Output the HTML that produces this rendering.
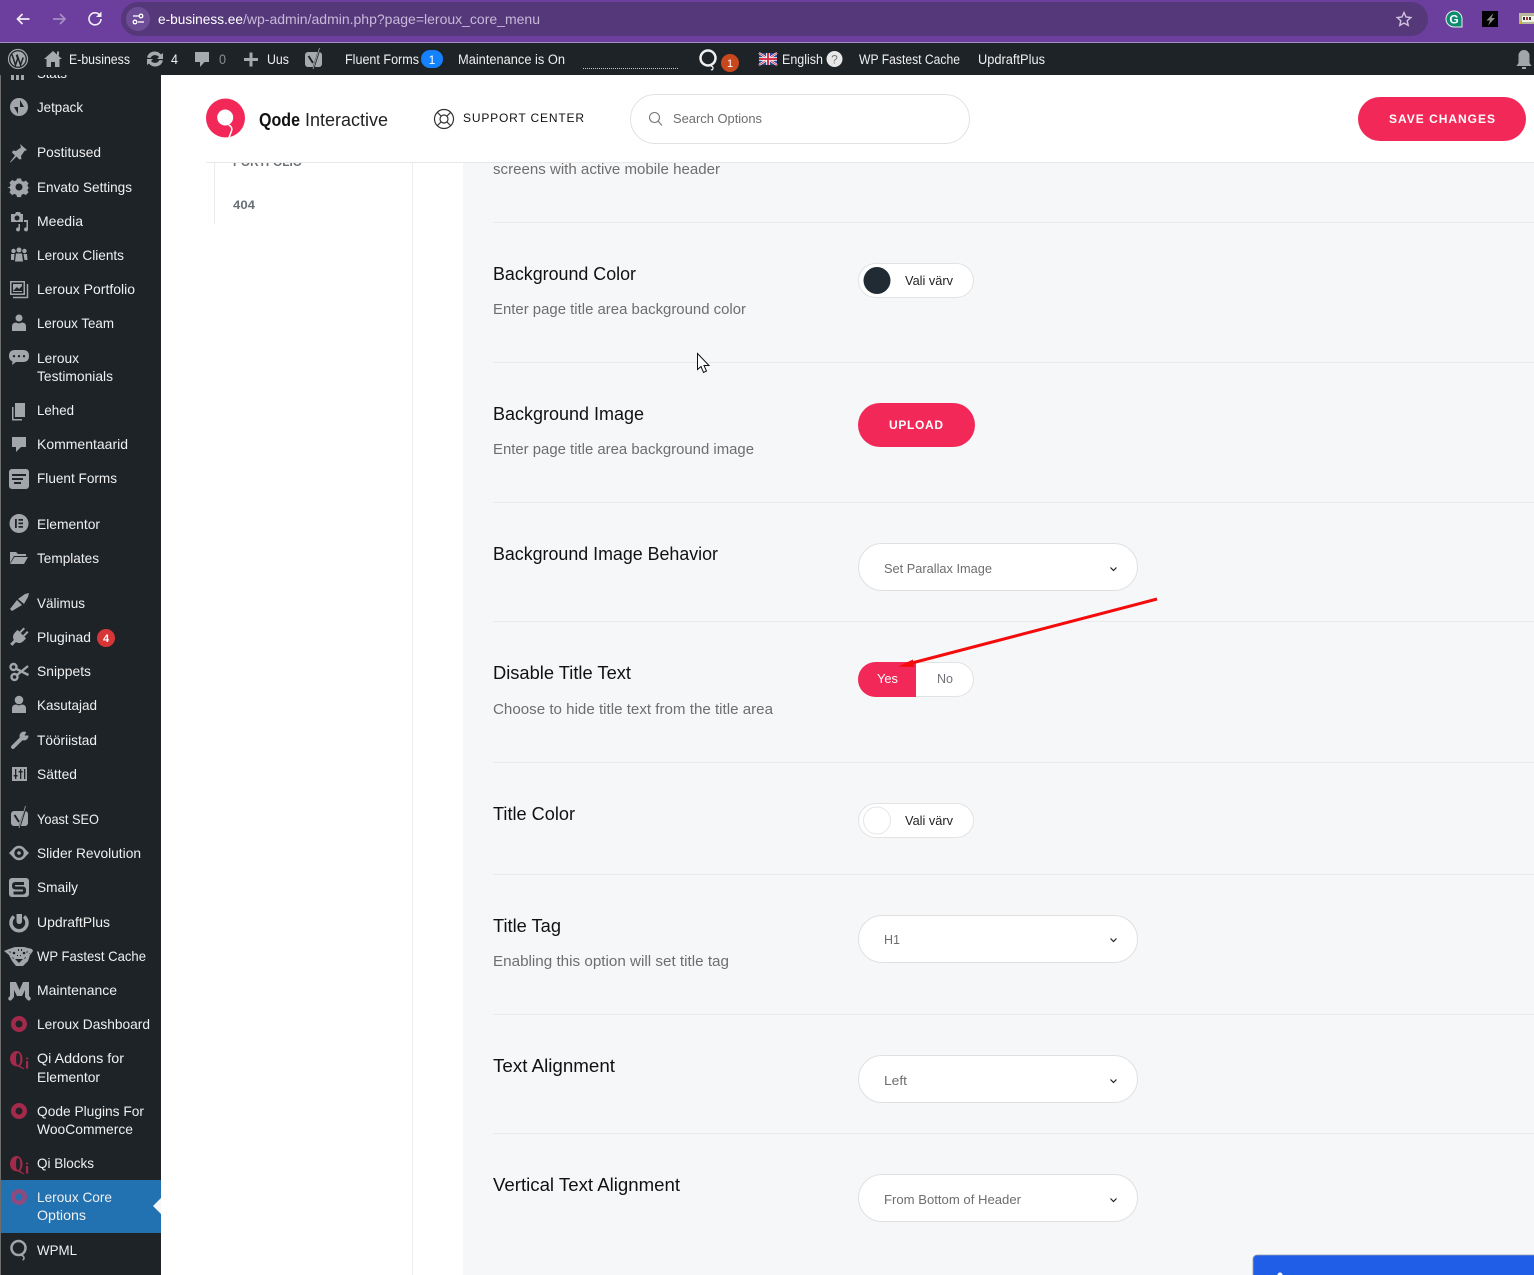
<!DOCTYPE html>
<html><head><meta charset="utf-8"><title>Leroux Core Options</title>
<style>
html,body{margin:0;padding:0;background:#fff}
svg{display:block}
text{font-family:"Liberation Sans",sans-serif;white-space:pre}
.m{font-size:14px;fill:#f0f0f1}
.a{font-size:13.5px;fill:#f0f0f1}
.t{font-size:18px;fill:#111}
.d{font-size:14.5px;fill:#6e6e6e}
.s{font-size:13px;fill:#6e6e6e}
.i{fill:#a2a6ab}
.r{fill:#a32a4a}
</style></head><body>
<svg xmlns="http://www.w3.org/2000/svg" width="1534" height="1275" viewBox="0 0 1534 1275">
<rect width="1534" height="1275" fill="#fff"/>

<!-- content -->
<rect x="463" y="162" width="1071" height="1113" fill="#f6f7f9"/>
<rect x="412" y="162" width="1" height="1113" fill="#eeeeee"/>
<rect x="214" y="162" width="1" height="62" fill="#ececec"/>
<text x="233" y="166" font-size="12" font-weight="bold" fill="#6b7075" textLength="69" lengthAdjust="spacingAndGlyphs">PORTFOLIO</text>
<text x="233" y="209" font-size="12" font-weight="bold" fill="#6b7075" textLength="22" lengthAdjust="spacingAndGlyphs">404</text>

<text x="493" y="174" class="d" textLength="227" lengthAdjust="spacingAndGlyphs">screens with active mobile header</text>
<g fill="#e9ebee">
<rect x="493" y="222" width="1041" height="1"/><rect x="493" y="362" width="1041" height="1"/>
<rect x="493" y="502" width="1041" height="1"/><rect x="493" y="621" width="1041" height="1"/>
<rect x="493" y="762" width="1041" height="1"/><rect x="493" y="874" width="1041" height="1"/>
<rect x="493" y="1014" width="1041" height="1"/><rect x="493" y="1133" width="1041" height="1"/>
</g>

<text x="493" y="280" class="t" textLength="143" lengthAdjust="spacingAndGlyphs">Background Color</text>
<text x="493" y="314" class="d" textLength="253" lengthAdjust="spacingAndGlyphs">Enter page title area background color</text>
<text x="493" y="420" class="t" textLength="151" lengthAdjust="spacingAndGlyphs">Background Image</text>
<text x="493" y="454" class="d" textLength="261" lengthAdjust="spacingAndGlyphs">Enter page title area background image</text>
<text x="493" y="560" class="t" textLength="225" lengthAdjust="spacingAndGlyphs">Background Image Behavior</text>
<text x="493" y="679" class="t" textLength="138" lengthAdjust="spacingAndGlyphs">Disable Title Text</text>
<text x="493" y="714" class="d" textLength="280" lengthAdjust="spacingAndGlyphs">Choose to hide title text from the title area</text>
<text x="493" y="820" class="t" textLength="82" lengthAdjust="spacingAndGlyphs">Title Color</text>
<text x="493" y="932" class="t" textLength="68" lengthAdjust="spacingAndGlyphs">Title Tag</text>
<text x="493" y="966" class="d" textLength="236" lengthAdjust="spacingAndGlyphs">Enabling this option will set title tag</text>
<text x="493" y="1072" class="t" textLength="122" lengthAdjust="spacingAndGlyphs">Text Alignment</text>
<text x="493" y="1191" class="t" textLength="187" lengthAdjust="spacingAndGlyphs">Vertical Text Alignment</text>

<!-- colour picker 1 -->
<rect x="858.5" y="263.5" width="115" height="34" rx="17" fill="#fff" stroke="#e3e3e3"/>
<circle cx="877" cy="280.5" r="13.5" fill="#212b33"/>
<text x="905" y="285" font-size="13" fill="#222" textLength="48" lengthAdjust="spacingAndGlyphs">Vali värv</text>
<!-- upload -->
<rect x="858" y="403" width="117" height="44" rx="22" fill="#f22958"/>
<text x="889" y="429" font-size="12" font-weight="bold" fill="#fff" textLength="54" lengthAdjust="spacing">UPLOAD</text>
<!-- selects -->
<g fill="#fff" stroke="#e0e0e0">
<rect x="858.5" y="543.5" width="279" height="47" rx="23.5"/>
<rect x="858.5" y="915.5" width="279" height="47" rx="23.5"/>
<rect x="858.5" y="1055.5" width="279" height="47" rx="23.5"/>
<rect x="858.5" y="1174.5" width="279" height="47" rx="23.5"/>
</g>
<text x="884" y="573" class="s" textLength="108" lengthAdjust="spacingAndGlyphs">Set Parallax Image</text>
<text x="884" y="944" class="s" textLength="16" lengthAdjust="spacingAndGlyphs">H1</text>
<text x="884" y="1085" class="s" textLength="23" lengthAdjust="spacingAndGlyphs">Left</text>
<text x="884" y="1204" class="s" textLength="137" lengthAdjust="spacingAndGlyphs">From Bottom of Header</text>
<g fill="none" stroke="#222" stroke-width="1.2">
<path d="M1110.5 567.5l3 3 3-3"/><path d="M1110.5 938.5l3 3 3-3"/><path d="M1110.5 1079.5l3 3 3-3"/><path d="M1110.5 1198.5l3 3 3-3"/>
</g>
<!-- yes/no -->
<rect x="858.5" y="662.5" width="115" height="34" rx="17" fill="#fff" stroke="#e3e3e3"/>
<path d="M916 662H875.5a17.500 17.500 0 0 0 0 35H916z" fill="#f22958"/>
<text x="877" y="683" font-size="13" fill="#fff" textLength="21" lengthAdjust="spacingAndGlyphs">Yes</text>
<text x="937" y="683" font-size="13" fill="#6e7278" textLength="16" lengthAdjust="spacingAndGlyphs">No</text>
<!-- colour picker 2 -->
<rect x="858.500" y="803.500" width="115" height="34" rx="17" fill="#fff" stroke="#e3e3e3"/>
<circle cx="877" cy="820.500" r="13.500" fill="#fff" stroke="#e6e6e6"/>
<text x="905" y="825" font-size="13" fill="#222" textLength="48" lengthAdjust="spacingAndGlyphs">Vali värv</text>

<!-- red arrow -->
<path d="M1157 599L908 664" stroke="#f40c0c" stroke-width="3" fill="none"/>
<path d="M898 666.500L913 659.500L914 667z" fill="#f40c0c"/>
<!-- cursor -->
<path d="M697.500 353.500V369.500L701 366.500L703.500 372.500L706.500 371L704 365.500H709z" fill="#fff" stroke="#111" stroke-width="1"/>
<!-- blue widget -->
<path d="M1253 1275V1259a4 4 0 0 1 4-4H1534V1275z" fill="#215ee8"/>
<path d="M1253 1275V1259a4 4 0 0 1 4-4H1534" fill="none" stroke="#9a9ea6" stroke-width=".8"/>
<circle cx="1280" cy="1275" r="2.500" fill="#fff"/>

<!-- header -->
<rect x="161" y="75" width="1373" height="87" fill="#fff"/>
<rect x="206" y="162" width="1328" height="1" fill="#e8e8e8"/>
<circle cx="225.500" cy="118" r="19.500" fill="#f22958"/>
<circle cx="225.200" cy="117.500" r="8" fill="#fff"/>
<path d="M228 124.500q5 2.500 3.500 6.500t-2.500 6.500" fill="none" stroke="#fff" stroke-width="1.500"/>
<text x="259" y="126" font-size="18.500" font-weight="bold" fill="#111" textLength="41" lengthAdjust="spacingAndGlyphs">Qode</text>
<text x="305" y="126" font-size="18.500" fill="#222" textLength="83" lengthAdjust="spacingAndGlyphs">Interactive</text>
<g fill="none" stroke="#333" stroke-width="1.200">
<circle cx="444" cy="119" r="9.500"/><circle cx="444" cy="119" r="4"/>
<path d="M437.500 112.500l3.700 3.700M450.500 112.500l-3.700 3.700M437.500 125.500l3.700-3.700M450.500 125.500l-3.700-3.700"/>
</g>
<text x="463" y="122" font-size="12" fill="#111" textLength="121" lengthAdjust="spacing">SUPPORT CENTER</text>
<rect x="630.500" y="94.500" width="339" height="49" rx="24.500" fill="#fff" stroke="#e2e2e2"/>
<circle cx="654.500" cy="117.500" r="5" fill="none" stroke="#777" stroke-width="1.100"/>
<path d="M658 121l4 4.500" stroke="#777" stroke-width="1.100"/>
<text x="673" y="123" class="s" textLength="89" lengthAdjust="spacingAndGlyphs">Search Options</text>
<rect x="1358" y="97" width="168" height="44" rx="22" fill="#f22958"/>
<text x="1389" y="123" font-size="12" font-weight="bold" fill="#fff" textLength="106" lengthAdjust="spacing">SAVE CHANGES</text>

<!-- sidebar -->
<rect x="0" y="75" width="161" height="1200" fill="#1d2327"/>
<rect x="0" y="75" width="1" height="1200" fill="#6e6e6e"/>
<rect x="1" y="1180" width="160" height="53" fill="#2271b1"/>
<path d="M161 1198L153 1206L161 1214z" fill="#f6f7f9"/>

<text x="37" y="78" class="m" textLength="30" lengthAdjust="spacingAndGlyphs">Stats</text>
<text x="37" y="112" class="m" textLength="46" lengthAdjust="spacingAndGlyphs">Jetpack</text>
<text x="37" y="157" class="m" textLength="64" lengthAdjust="spacingAndGlyphs">Postitused</text>
<text x="37" y="192" class="m" textLength="95" lengthAdjust="spacingAndGlyphs">Envato Settings</text>
<text x="37" y="226" class="m" textLength="46" lengthAdjust="spacingAndGlyphs">Meedia</text>
<text x="37" y="260" class="m" textLength="87" lengthAdjust="spacingAndGlyphs">Leroux Clients</text>
<text x="37" y="294" class="m" textLength="98" lengthAdjust="spacingAndGlyphs">Leroux Portfolio</text>
<text x="37" y="328" class="m" textLength="77" lengthAdjust="spacingAndGlyphs">Leroux Team</text>
<text x="37" y="363" class="m" textLength="42" lengthAdjust="spacingAndGlyphs">Leroux</text>
<text x="37" y="381" class="m" textLength="76" lengthAdjust="spacingAndGlyphs">Testimonials</text>
<text x="37" y="415" class="m" textLength="37" lengthAdjust="spacingAndGlyphs">Lehed</text>
<text x="37" y="449" class="m" textLength="91" lengthAdjust="spacingAndGlyphs">Kommentaarid</text>
<text x="37" y="483" class="m" textLength="80" lengthAdjust="spacingAndGlyphs">Fluent Forms</text>
<text x="37" y="529" class="m" textLength="63" lengthAdjust="spacingAndGlyphs">Elementor</text>
<text x="37" y="563" class="m" textLength="62" lengthAdjust="spacingAndGlyphs">Templates</text>
<text x="37" y="608" class="m" textLength="48" lengthAdjust="spacingAndGlyphs">Välimus</text>
<text x="37" y="642" class="m" textLength="54" lengthAdjust="spacingAndGlyphs">Pluginad</text>
<text x="37" y="676" class="m" textLength="54" lengthAdjust="spacingAndGlyphs">Snippets</text>
<text x="37" y="710" class="m" textLength="60" lengthAdjust="spacingAndGlyphs">Kasutajad</text>
<text x="37" y="745" class="m" textLength="60" lengthAdjust="spacingAndGlyphs">Tööriistad</text>
<text x="37" y="779" class="m" textLength="40" lengthAdjust="spacingAndGlyphs">Sätted</text>
<text x="37" y="824" class="m" textLength="62" lengthAdjust="spacingAndGlyphs">Yoast SEO</text>
<text x="37" y="858" class="m" textLength="104" lengthAdjust="spacingAndGlyphs">Slider Revolution</text>
<text x="37" y="892" class="m" textLength="41" lengthAdjust="spacingAndGlyphs">Smaily</text>
<text x="37" y="927" class="m" textLength="73" lengthAdjust="spacingAndGlyphs">UpdraftPlus</text>
<text x="37" y="961" class="m" textLength="109" lengthAdjust="spacingAndGlyphs">WP Fastest Cache</text>
<text x="37" y="995" class="m" textLength="80" lengthAdjust="spacingAndGlyphs">Maintenance</text>
<text x="37" y="1029" class="m" textLength="113" lengthAdjust="spacingAndGlyphs">Leroux Dashboard</text>
<text x="37" y="1063" class="m" textLength="87" lengthAdjust="spacingAndGlyphs">Qi Addons for</text>
<text x="37" y="1082" class="m" textLength="63" lengthAdjust="spacingAndGlyphs">Elementor</text>
<text x="37" y="1116" class="m" textLength="107" lengthAdjust="spacingAndGlyphs">Qode Plugins For</text>
<text x="37" y="1134" class="m" textLength="96" lengthAdjust="spacingAndGlyphs">WooCommerce</text>
<text x="37" y="1168" class="m" textLength="57" lengthAdjust="spacingAndGlyphs">Qi Blocks</text>
<text x="37" y="1202" class="m" fill="#fff" textLength="75" lengthAdjust="spacingAndGlyphs">Leroux Core</text>
<text x="37" y="1220" class="m" fill="#fff" textLength="49" lengthAdjust="spacingAndGlyphs">Options</text>
<text x="37" y="1255" class="m" textLength="40" lengthAdjust="spacingAndGlyphs">WPML</text>

<!-- sidebar badge -->
<circle cx="106" cy="638" r="9" fill="#d63638"/>
<text x="106" y="642" font-size="11" font-weight="bold" fill="#fff" text-anchor="middle">4</text>

<!-- sidebar icons -->
<g class="i">
<!-- stats -->
<rect x="11" y="75" width="3" height="5"/><rect x="16" y="75" width="3" height="5"/><rect x="21" y="75" width="3" height="5"/>
<!-- jetpack -->
<path fill-rule="evenodd" d="M19 98a9 9 0 1 0 0 18a9 9 0 1 0 0-18zM20 100v7h4zM18 114v-7h-4z"/>
<!-- pin -->
<path d="M20 144l7 6-2.500 1-3.500 5 .5 3-2 .5-3-3-6 6-.5-.5 5-6.500-3-3 1-2 3 .5 5-3.500z"/>
<!-- gear -->
<path fill-rule="evenodd" d="M17 179h4l.6 2.300 2.200.9 2-1.200 2.800 2.800-1.200 2 .9 2.200 2.300.6v0h-2.300l-.9 2.200 1.200 2-2.800 2.800-2-1.200-2.200.9-.6 2.300h-4l-.6-2.300-2.200-.9-2 1.200-2.800-2.800 1.200-2-.9-2.200-2.300-.6v-0l2.300-.6.9-2.200-1.200-2 2.800-2.800 2 1.200 2.200-.9zM19 184a3.500 3.500 0 1 0 0 7a3.500 3.500 0 1 0 0-7z" transform="translate(0,-.5)"/>
<!-- media -->
<path fill-rule="evenodd" d="M11 214h4l1-2h4l1 2h2v8H11zM17 215.500a2.500 2.500 0 1 0 0 5a2.500 2.500 0 1 0 0-5z"/>
<path d="M24 220h4v9.500a2 2 0 1 1-1.500-2V222h-2.500zM20 224v5.500a2 2 0 1 1-1.500-2V224z"/>
<!-- clients -->
<circle cx="19" cy="250" r="2.500"/><circle cx="13.500" cy="251" r="2.200"/><circle cx="24.500" cy="251" r="2.200"/>
<path d="M16 253.500h6l1 8h-8zM11 254h3.500l-.5 6h-3zM23.500 254H27l.5 6h-3z"/>
<!-- portfolio -->
<path fill-rule="evenodd" d="M10 281h15v14H10zM11.500 282.500v11h12v-11z"/><rect x="13" y="284" width="9" height="8"/>
<path d="M13 291l4-4 2 2 3-3v5z" fill="#1d2327"/>
<path fill="none" stroke="#a2a6ab" stroke-width="1.500" d="M27.500 284v13.500H13"/>
<!-- team -->
<circle cx="19" cy="318" r="3.500"/><path d="M12 331v-5q0-3 4-3.500l3 1 3-1q4 .5 4 3.500v5z"/>
<!-- testimonials -->
<path fill-rule="evenodd" d="M15 350h8q6 0 6 6t-6 6h-7l-4 3 .5-3.500Q9 360 9 356q0-6 6-6zM14 355a1.200 1.200 0 1 0 0 2.400a1.200 1.200 0 1 0 0-2.400zM19 355a1.200 1.200 0 1 0 0 2.400a1.200 1.200 0 1 0 0-2.400zM24 355a1.200 1.200 0 1 0 0 2.400a1.200 1.200 0 1 0 0-2.400z"/>
<!-- pages -->
<path d="M15 403h10v14H15z"/><path d="M12 407h1.500v12H22v1.500H12z"/>
<!-- comments -->
<path d="M12 437h14v10h-5l-5 5v-5h-4z"/>
<!-- fluent -->
<path fill-rule="evenodd" d="M12 469h14a3 3 0 0 1 3 3v14a3 3 0 0 1-3 3H12a3 3 0 0 1-3-3v-14a3 3 0 0 1 3-3zM12 474v2h14v-2zM12 478v2h11v-2zM14 482v2h7v-2z"/>
<!-- elementor -->
<path fill-rule="evenodd" d="M19 514a9.500 9.500 0 1 0 0 19a9.500 9.500 0 1 0 0-19zM15 519h1.800v9H15zM18.500 519H23v1.800h-4.500zM18.500 522.500H23v1.800h-4.500zM18.500 526H23v1.800h-4.500z"/>
<!-- templates -->
<path d="M10 552h6l2 2h8v2H14l-4 7z"/><path d="M14.500 557H28l-4 7H10z"/>
<!-- appearance: brush -->
<path d="M18 599l7-5 4-1-1 4-4 7z"/><path d="M17 600l5 5-10 6-2-2z"/>
<!-- plugins: plug -->
<g transform="rotate(45 19 637)"><rect x="15.500" y="627" width="2" height="6"/><rect x="20.500" y="627" width="2" height="6"/><path d="M13 633h12v4a6 6 0 0 1-4.500 5.800V648h-3v-5.200a6 6 0 0 1-4.500-5.800z"/></g>
<!-- snippets -->
<g fill="none" stroke="#a2a6ab" stroke-width="2.400"><circle cx="13.500" cy="667" r="3"/><circle cx="14.500" cy="677" r="3"/><path d="M16.500 669l12 6M17 675l11-9"/></g>
<!-- users -->
<circle cx="19" cy="700" r="4.300"/><path d="M12 713v-5q0-3 4-3.500l3 1 3-1q4 .5 4 3.500v5z"/>
<!-- tools: wrench -->
<path d="M13 747L23 737" stroke="#a2a6ab" stroke-width="4" stroke-linecap="round" fill="none"/>
<circle cx="24" cy="736" r="4.500"/>
<path d="M24.500 735.500L27 731h4v4.500z" fill="#1d2327"/>
<!-- settings -->
<rect x="12" y="767" width="15" height="14"/>
<g fill="#1d2327"><rect x="15" y="769" width="1.300" height="10"/><rect x="13.600" y="775" width="4" height="1.500"/><rect x="20" y="769" width="1.300" height="10"/><rect x="18.600" y="771" width="4" height="1.500"/><rect x="24" y="769" width="1.300" height="10"/></g>
<!-- yoast -->
<rect x="11" y="811" width="17" height="15" rx="3"/>
<path d="M14.500 815l4.500 7M25.500 808l-6 19" fill="none" stroke="#1d2327" stroke-width="2"/>
<path d="M25.500 806l-6.500 22" fill="none" stroke="#a2a6ab" stroke-width=".8"/>
<!-- slider rev -->
<path d="M9 853l5-5v10zM29 853l-5-5v10z"/>
<circle cx="19" cy="853" r="6" fill="none" stroke="#a2a6ab" stroke-width="2.500"/>
<circle cx="19" cy="853" r="1.800"/>
<!-- smaily -->
<rect x="9" y="878" width="20" height="19" rx="3"/>
<path d="M24 883.500H15.500Q13.500 883.500 13.500 885.500V886Q13.500 888 15.500 888H22.500Q24.500 888 24.500 890V891Q24.500 893 22.500 893H13.500" fill="none" stroke="#1d2327" stroke-width="3"/>
<!-- updraft -->
<path d="M14 916.500a8 8 0 1 0 10 0" fill="none" stroke="#a2a6ab" stroke-width="3.500"/>
<path d="M16.500 914h5.500v7q0 3-2.700 3t-2.800-3z"/>
<!-- cheetah -->
<path d="M4 951l5-2 6-2h9l8 2 1 2-3 4-2 6-5 5h-7l-4-5-3-6z"/>
<!-- maintenance -->
<path d="M10 982h6l3.500 8 3.500-8h6v14l1 1a2 2 0 1 1-3 2.500l-2-2.500v-7l-3 6h-5l-3-6v7l-2 2.500a2 2 0 1 1-3-2.500l1-1z"/>
</g>
<!-- tiger face details -->
<g fill="#1d2327"><circle cx="14" cy="953" r="1.300"/><circle cx="24" cy="953" r="1.300"/><path d="M15 959h8l-4 4z"/>
<path d="M9 951l2 1-1 1zM28 951l-2 1 1 1zM18 949h1v2h-1zM21 949h1v2h-1zM12 957l2 1-1 1zM26 957l-2 1 1 1zM8 955l1 1-1 .5zM30 953l-1 1 0-1zM17 955h1v1h-1zM20 955h1v1h-1z"/></g>
<!-- wpml -->
<circle cx="18.500" cy="1248" r="7" fill="none" stroke="#a2a6ab" stroke-width="2.500"/>
<path d="M21 1255q3 1 3 3t-1.500 1.500" fill="none" stroke="#a2a6ab" stroke-width="1.500"/>
<!-- red qode icons -->
<g class="r">
<path fill-rule="evenodd" d="M19 1016a8 8 0 1 0 0 16a8 8 0 1 0 0-16zM19 1020.500a3.500 3.500 0 1 0 0 7a3.500 3.500 0 1 0 0-7z"/>
<path fill-rule="evenodd" d="M19 1103a8 8 0 1 0 0 16a8 8 0 1 0 0-16zM19 1107.500a3.500 3.500 0 1 0 0 7a3.500 3.500 0 1 0 0-7z"/>
<path fill-rule="evenodd" d="M16.500 1051c3.800 0 6 3.500 6 8 0 3-1 5.500-2.500 6.800l4.500 3-1 .5-5.500-2.800c-4.500 0-8-2.900-8-7.500s3-8 6.500-8zM18 1053c-1.500 0-2 2.700-2 6s.5 6 2 6 2.300-2.700 2.300-6-.8-6-2.300-6z"/>
<rect x="26" y="1061" width="2.200" height="7.500"/><circle cx="27.100" cy="1058.500" r="1.100"/>
<path fill-rule="evenodd" d="M16.500 1156c3.800 0 6 3.500 6 8 0 3-1 5.500-2.500 6.800l4.500 3-1 .5-5.500-2.800c-4.500 0-8-2.900-8-7.500s3-8 6.500-8zM18 1158c-1.500 0-2 2.700-2 6s.5 6 2 6 2.300-2.700 2.300-6-.8-6-2.300-6z"/>
<rect x="26" y="1166" width="2.200" height="7.500"/><circle cx="27.100" cy="1163.500" r="1.100"/>
</g>
<path fill-rule="evenodd" fill="#8f4a80" d="M19 1189a8 8 0 1 0 0 16a8 8 0 1 0 0-16zM19 1193.500a3.500 3.500 0 1 0 0 7a3.500 3.500 0 1 0 0-7z"/>

<!-- browser chrome -->
<rect x="0" y="0" width="1534" height="42" fill="#6c3f9e"/>
<rect x="0" y="42" width="1534" height="1" fill="#a58fc4"/>
<rect x="121" y="2" width="1307" height="34" rx="17" fill="#55387a"/>
<circle cx="138" cy="19" r="12" fill="#6d4d96"/>
<g fill="none" stroke="#fff" stroke-width="1.300">
<circle cx="141" cy="16" r="1.800"/><path d="M133 16h5.500"/><circle cx="135" cy="22" r="1.800"/><path d="M138 22h6"/>
</g>
<g fill="none" stroke="#f2edf7" stroke-width="1.700">
<path d="M29.500 19H17.500M22.500 14l-5 5 5 5"/>
</g>
<path d="M65 19H53M60 14l5 5-5 5" fill="none" stroke="#a58fc4" stroke-width="1.700"/>
<path d="M100 15.500a6 6 0 1 0 1 3.500" fill="none" stroke="#f2edf7" stroke-width="1.600"/>
<path d="M101.500 11.500v5.500H96z" fill="#f2edf7"/>
<text x="158" y="24" font-size="14" fill="#fff" textLength="85" lengthAdjust="spacingAndGlyphs">e-business.ee</text>
<text x="243" y="24" font-size="14" fill="#c8b9d9" textLength="297" lengthAdjust="spacingAndGlyphs">/wp-admin/admin.php?page=leroux_core_menu</text>
<path d="M1404 12.500l2 4.500 4.800.5-3.600 3.200 1 4.700-4.200-2.400-4.200 2.400 1-4.700-3.600-3.200 4.800-.5z" fill="none" stroke="#cfc4dc" stroke-width="1.400"/>
<!-- grammarly -->
<path d="M1454 11a8 8 0 0 1 8 8v8h-8a8 8 0 0 1 0-16z" fill="#0e8a72" stroke="#e7efe9" stroke-width="1"/>
<text x="1454" y="23.500" font-size="12" font-weight="bold" fill="#fff" text-anchor="middle">G</text>
<!-- bolt -->
<rect x="1482" y="11" width="16" height="16" fill="#000"/>
<path d="M1493.500 13l-7 7.500h3.500l-2 5 7-7.500h-3.500z" fill="#8a8a8a"/>
<!-- ext 3 -->
<rect x="1519" y="13" width="15" height="11" fill="#b9b99a"/>
<rect x="1522" y="16" width="12" height="6" fill="#f4f2e8"/>
<rect x="1523" y="17" width="2" height="3" fill="#333"/><rect x="1526" y="17" width="2" height="3" fill="#a33"/><rect x="1529" y="17" width="2" height="3" fill="#333"/>
<rect x="1519" y="21" width="3" height="3" fill="#c8b820"/>

<!-- admin bar -->
<rect x="0" y="43" width="1534" height="32" fill="#1d2327"/>
<!-- wp logo -->
<circle cx="18" cy="59" r="9.500" fill="none" stroke="#a7aaad" stroke-width="1.200"/>
<circle cx="18" cy="59" r="7.600" fill="#a7aaad"/>
<path d="M12 54.500l3.500 10.500 2.200-6.500-1.200-3.500M17 54.500l3.500 10.500 2.700-7.500" fill="none" stroke="#1d2327" stroke-width="1.500"/>
<!-- home -->
<path d="M53 51l9 8h-2.500v8H55v-5h-4v5h-4.500v-8H44z" fill="#a7aaad"/>
<rect x="57" y="51.500" width="2" height="4" fill="#a7aaad"/>
<text x="69" y="64" class="a" textLength="61" lengthAdjust="spacingAndGlyphs">E-business</text>
<!-- updates -->
<path d="M147 57.500a8 8 0 0 1 14-3l2-1.500v6h-6l2-2a5 5 0 0 0-8.500 1zM163 60.500a8 8 0 0 1-14 3l-2 1.500v-6h6l-2 2a5 5 0 0 0 8.500-1z" fill="#a7aaad"/>
<text x="171" y="64" class="a" textLength="7" lengthAdjust="spacingAndGlyphs">4</text>
<!-- comment -->
<path d="M195 52h14v10h-4.500l-4.500 5v-5h-5z" fill="#a7aaad"/>
<text x="219" y="64" class="a" style="fill:#8c8f94" textLength="7" lengthAdjust="spacingAndGlyphs">0</text>
<!-- plus -->
<path d="M249.500 52.500h3v5.500h5.500v3h-5.500v5.500h-3V61H244v-3h5.500z" fill="#a7aaad"/>
<text x="267" y="64" class="a" textLength="22" lengthAdjust="spacingAndGlyphs">Uus</text>
<!-- yoast -->
<rect x="305" y="52" width="17" height="15" rx="3" fill="#a7aaad"/>
<path d="M308.500 56l4.500 7M319.500 49l-6 19" fill="none" stroke="#1d2327" stroke-width="2"/>
<path d="M319.500 48l-6.500 21" fill="none" stroke="#a7aaad" stroke-width=".8"/>
<text x="345" y="64" class="a" textLength="74" lengthAdjust="spacingAndGlyphs">Fluent Forms</text>
<rect x="421" y="50" width="22" height="18" rx="9" fill="#1482ff"/>
<text x="432" y="64" font-size="12" fill="#fff" text-anchor="middle">1</text>
<text x="458" y="64" class="a" textLength="107" lengthAdjust="spacingAndGlyphs">Maintenance is On</text>
<path d="M583 68.500h95" stroke="#c8c8c8" stroke-dasharray="1 1" stroke-width="1"/>
<!-- Q -->
<circle cx="708" cy="58" r="7.500" fill="none" stroke="#f0f0f1" stroke-width="2.500"/>
<path d="M710 65.500q3.500 1 3 3t-2 1" fill="none" stroke="#f0f0f1" stroke-width="1.300"/>
<circle cx="730" cy="63" r="9" fill="#c9471c"/>
<text x="730" y="67" font-size="11" fill="#fff" text-anchor="middle">1</text>
<!-- flag -->
<rect x="759" y="53" width="18" height="12" fill="#2a4d9b"/>
<path d="M759 53l18 12M777 53l-18 12" stroke="#fff" stroke-width="2.200"/>
<path d="M759 53l18 12M777 53l-18 12" stroke="#d8344a" stroke-width=".9"/>
<path d="M768 53v12M759 59h18" stroke="#fff" stroke-width="3.600"/>
<path d="M768 53v12M759 59h18" stroke="#d8344a" stroke-width="2"/>
<text x="782" y="64" class="a" textLength="41" lengthAdjust="spacingAndGlyphs">English</text>
<circle cx="834.500" cy="59" r="8" fill="#e8e8e8"/>
<text x="834.500" y="63.500" font-size="12" fill="#777" text-anchor="middle">?</text>
<text x="859" y="64" class="a" textLength="101" lengthAdjust="spacingAndGlyphs">WP Fastest Cache</text>
<text x="978" y="64" class="a" textLength="67" lengthAdjust="spacingAndGlyphs">UpdraftPlus</text>
<!-- bell -->
<path d="M1524 50a5.500 5.500 0 0 1 5.500 5.500V63l2 3h-15l2-3v-7.500a5.500 5.500 0 0 1 5.500-5.500z" fill="#a2a6ab"/>
<rect x="1522" y="67" width="4" height="2" fill="#a2a6ab"/>
</svg>
</body></html>
